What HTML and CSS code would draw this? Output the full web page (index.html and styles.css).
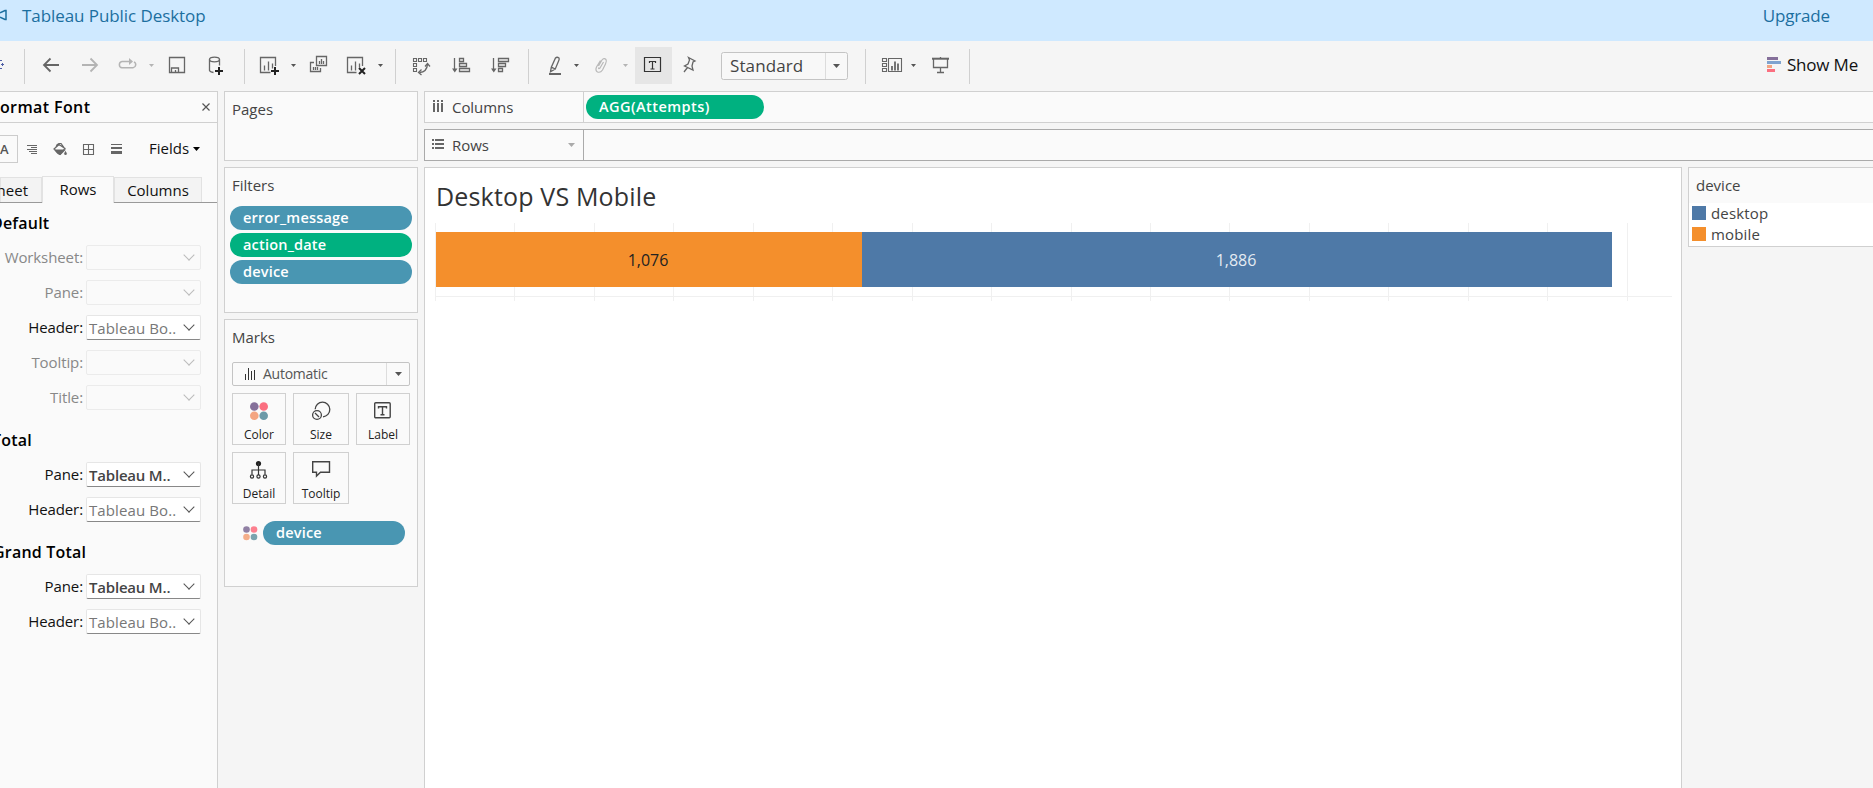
FILE: index.html
```
<!DOCTYPE html>
<html lang="en">
<head>
<meta charset="utf-8">
<title>Tableau Public Desktop</title>
<link rel="stylesheet" href="styles.css">
</head>
<body>
<div class="app">
  <header class="banner">
    <svg class="horn" width="8" height="16" viewBox="0 0 8 16"><path d="M0 5.800L5 3.500h1v9H5L0 10.200" fill="none" stroke="#1c6f9f" stroke-width="1.500"/></svg>
    <span class="brand">Tableau Public Desktop</span>
    <span class="upgrade">Upgrade</span>
  </header>

  <nav class="toolbar">
    <svg class="tools" width="980" height="50" viewBox="0 41 980 50" fill="none" stroke="#666" stroke-width="1.3">
      <path d="M0 60.500h2M0 68.500h2M1 64.500h3M2.500 63v3" stroke="#4e5fa5" stroke-width="1"/>
      <path d="M24.500 49v35M244.500 49v35M395.500 49v35M528.500 49v35M865.500 49v35M969.500 49v35" stroke="#d0d0d0" stroke-width="1"/>
      <path d="M59 65H44.500M50.500 58.500L44 65l6.500 6.500" stroke-width="1.8"/>
      <path d="M82 65h14.500M90.500 58.500L97 65l-6.500 6.500" stroke="#b4b4b4" stroke-width="1.8"/>
      <path d="M129 61.500h-7a3.200 3.200 0 0 0 0 6.300h11a3.200 3.200 0 0 0 1-6" stroke="#b4b4b4" stroke-width="1.500"/>
      <path d="M129 58l4 3.500-4 3.500z" fill="#b4b4b4" stroke="none"/>
      <path d="M149 64h5l-2.500 3z" fill="#b4b4b4" stroke="none"/>
      <path d="M169.500 57.500h15v15h-15zM171.500 72v-4h7v4M175.500 70v2.500"/>
      <ellipse cx="214.500" cy="59.500" rx="5" ry="2.300"/>
      <path d="M209.500 59.500v11q.5 1.500 4 2M219.500 59.500v6"/>
      <path d="M215 71h8M219 67v8" stroke="#222" stroke-width="2"/>
      <path d="M275.500 66v-8.500h-15v15h10M264.500 65.500v5M268.500 61.500v9M272.500 63.500v5"/>
      <path d="M271 71h8M275 67v8" stroke="#222" stroke-width="2"/>
      <path d="M291 64h5l-2.500 3z" fill="#555" stroke="none"/>
      <path d="M316.500 56.500h10v9h-10zM319.500 61v3M321.500 59v5M323.500 61v3M314 62.500h-3.500v9h10V68M313.500 67v3M315.500 67v3M317.500 67v3"/>
      <path d="M362.500 66v-8.500h-15v15h9M351.500 65.500v5M355.500 61.500v9M359.500 63.500v4"/>
      <path d="M359 68l6 6M365 68l-6 6" stroke="#222" stroke-width="2"/>
      <path d="M378 64h5l-2.500 3z" fill="#555" stroke="none"/>
      <path d="M413.500 58.500h3v3h-3zM418.500 58.500h3v3h-3zM423.500 58.500h3v3h-3zM413.500 63.500h3v3h-3zM413.500 68.500h3v3h-3z" stroke-width="1.100"/>
      <path d="M419.500 72.500q7.500-.5 8-8.500" stroke-width="1.400"/>
      <path d="M425 66.500l2.500-3 2.500 3M421.500 69.500l-3 3 3 2.500"/>
      <path d="M454.500 58v13M459.500 58.500h4v3h-4zM459.500 63.500h7v3h-7zM459.500 68.500h10v3h-10z"/>
      <path d="M452 68.500h5.500l-2.700 4z" fill="#666" stroke="none"/>
      <path d="M493.500 58v13M498.500 58.500h10v3h-10zM498.500 63.500h7v3h-7zM498.500 68.500h4v3h-4z"/>
      <path d="M491 68.500h5.500l-2.700 4z" fill="#666" stroke="none"/>
      <path d="M555.500 58q1.500-1.500 3.500 0 .5 1-.2 2.500l-3.500 8.500-4-1.800zM551.300 67.200l-.8 4.500 4.800-2.700"/>
      <path d="M549 74h12" stroke-width="2"/>
      <path d="M574 64h5l-2.500 3zM911 64h5l-2.500 3z" fill="#555" stroke="none"/>
      <path d="M598.500 66l3.500-6q2-2.500 4-.5 1 1.500-.5 4.500l-3 6q-2 3-5 2-2.500-1.500-1-5l4-6.500M603.500 62l-3.500 6q-1.500 1.500-1.500-.5" stroke="#b8b8b8" stroke-width="1.200"/>
      <path d="M623 64h5l-2.500 3z" fill="#b4b4b4" stroke="none"/>
      <path d="M635 47h37v37h-37z" fill="#e6e6e6" stroke="none"/>
      <path d="M644.500 57.500h16v14h-16zM649.500 63v-1.500h6V63M652.500 61.500v7.500M650.500 69h4" stroke="#333" stroke-width="1.200"/>
      <path d="M688.500 57.500l6.500 3.500-2 1-1 4 1 4-8.500-4 3.500-2 1.500-4zM687.500 67.500l-3.500 4.500"/>
      <path d="M721.500 54.500q0-2 2-2h122q2 0 2 2v23q0 2-2 2h-122q-2 0-2-2z" fill="#f8f8f8" stroke="#c4c4c4" stroke-width="1"/>
      <path d="M825.500 53v26" stroke="#dcdcdc" stroke-width="1"/>
      <path d="M833 64h7l-3.500 4z" fill="#555" stroke="none"/>
      <path d="M888.500 58.500h13v13h-13zM882.500 58.500h4v3h-4zM882.500 63.500h4v3h-4zM882.500 68.500h4v3h-4z" stroke-width="1.100"/>
      <path d="M892 66v4.500M895 61.500v9M898 63.500v7" stroke-width="1.800"/>
      <path d="M932 58.700h17" stroke-width="2"/>
      <path d="M933.500 59v8.500h14V59M940.500 57v2M940.500 67.500v5M937 72.500h7"/>
    </svg>
    <span class="fit">Standard</span>
    <div class="showme">
      <svg width="14" height="16" viewBox="0 0 14 16"><path d="M0 0h11v3H0z" fill="#85709a"/><path d="M0 4h14v3H0z" fill="#7fa3cf"/><path d="M0 8h5v3H0z" fill="#f1a582"/><path d="M0 12h8v3H0z" fill="#fb6f80"/></svg>
      <span>Show Me</span>
    </div>
  </nav>

  <main class="work">
    <aside class="format">
      <div class="format-head"><b>Format Font</b>
        <svg width="8" height="8" viewBox="0 0 8 8"><path d="M.5.5l7 7M7.500.5l-7 7" stroke="#555" stroke-width="1.200"/></svg></div>
      <div class="format-tools">
        <span class="abox">A</span>
        <svg width="109" height="14" viewBox="18 0 109 14" fill="none" stroke="#666">
          <path d="M27 2.500h10M31 4.500h6M27 6.500h10M29 8.500h8M31 10.500h6" stroke="#666"/>
          <path d="M54 6l5-4.500 6 4-5 6zM56 4q1-4 5-3.500l3 4" stroke-width="1.200"/><path d="M54 6.500h12l-5.500 5.500q-3 0-6.500-5.500z" fill="#666" stroke="none"/><path d="M65.500 8.500q2 3 0 3.500-2-.5 0-3.500" fill="#666" stroke-width=".8"/>
          <path d="M83.500 1.500h10v10h-10zM88.500 1.500v10M83.500 6.500h10" stroke-width="1.100"/>
          <path d="M111 1h11v1h-11zM111 4h11v2h-11zM111 8h11v3h-11z" fill="#666" stroke="none"/>
        </svg>
        <span class="fields">Fields</span><svg class="ftri" width="7" height="4" viewBox="0 0 7 4"><path d="M0 0h7L3.500 4z"/></svg>
      </div>
      <div class="tabs"><span class="tab t1">Sheet</span><span class="tab on">Rows</span><span class="tab t3">Columns</span></div>
      <h3 class="h-def">Default</h3>
      <div class="row off"><label>Worksheet:</label><span class="sel"></span></div>
      <div class="row off"><label>Pane:</label><span class="sel"></span></div>
      <div class="row"><label>Header:</label><span class="sel">Tableau Bo..</span></div>
      <div class="row off"><label>Tooltip:</label><span class="sel"></span></div>
      <div class="row off"><label>Title:</label><span class="sel"></span></div>
      <h3 class="h-tot">Total</h3>
      <div class="row"><label>Pane:</label><span class="sel strong">Tableau M..</span></div>
      <div class="row"><label>Header:</label><span class="sel">Tableau Bo..</span></div>
      <h3 class="h-grand">Grand Total</h3>
      <div class="row"><label>Pane:</label><span class="sel strong">Tableau M..</span></div>
      <div class="row"><label>Header:</label><span class="sel">Tableau Bo..</span></div>
    </aside>

    <section class="cards">
      <div class="card pages"><h4>Pages</h4></div>
      <div class="card filters"><h4>Filters</h4>
        <div class="pill blue"><span>error_message</span></div>
        <div class="pill green"><span>action_date</span></div>
        <div class="pill blue"><span>device</span></div>
      </div>
      <div class="card marks"><h4>Marks</h4>
        <div class="mtype">
          <svg width="11" height="12" viewBox="0 0 11 12"><path d="M.5 6v6M3.500 0v12M6.500 3v9M9.500 2v10" stroke="#333" stroke-width="1"/></svg>
          <span>Automatic</span><i><svg width="7" height="4" viewBox="0 0 7 4"><path d="M0 0h7L3.500 4z" fill="#555"/></svg></i>
        </div>
        <div class="grid">
          <div class="btn"><svg width="20" height="20" viewBox="0 0 20 20"><circle cx="5.300" cy="5.500" r="4.300" fill="#85709a"/><circle cx="14.700" cy="5.500" r="4.300" fill="#fb6f80"/><circle cx="5.300" cy="14.800" r="4.300" fill="#f4a582"/><circle cx="14.700" cy="14.800" r="4.300" fill="#6d9aa8"/></svg><span>Color</span></div>
          <div class="btn"><svg width="20" height="20" viewBox="0 0 20 20" fill="none" stroke="#444" stroke-width="1.300"><path d="M4.200 8.300A7.300 7.300 0 1 1 12 15.800"/><circle cx="6" cy="14" r="4.400"/><path d="M4 12l4 4"/></svg><span>Size</span></div>
          <div class="btn"><svg width="20" height="20" viewBox="0 0 20 20" fill="none" stroke="#444" stroke-width="1.400"><rect x="1.700" y="1.800" width="15.500" height="15" rx="1"/><path d="M5.500 7.500V5.700h8v1.800M9.500 5.500v8.500M7.500 13.800h4"/></svg><span>Label</span></div>
          <div class="btn"><svg width="20" height="20" viewBox="0 0 20 20" fill="none" stroke="#333" stroke-width="1.200"><circle cx="9.500" cy="3.500" r="2.600" fill="#222" stroke="none"/><path d="M9.500 3v12M3 14.500V10h13v4.500"/><circle cx="3" cy="16.500" r="1.600"/><circle cx="9.500" cy="16.500" r="1.600"/><circle cx="16" cy="16.500" r="1.600"/></svg><span>Detail</span></div>
          <div class="btn"><svg width="20" height="20" viewBox="0 0 20 20" fill="none" stroke="#444" stroke-width="1.400"><path d="M2 1.700h16.500v10.500H9.500L5.500 16v-3.800H1.700V1.700z"/></svg><span>Tooltip</span></div>
        </div>
        <div class="enc"><svg width="15" height="15" viewBox="0 0 15 15"><circle cx="3.500" cy="3.500" r="3.300" fill="#9080a4"/><circle cx="11" cy="3.500" r="3.300" fill="#fc7f8e"/><circle cx="3.500" cy="11" r="3.300" fill="#f4ae8a"/><circle cx="11" cy="11" r="3.300" fill="#7aa3ae"/></svg>
          <div class="pill blue"><span>device</span></div></div>
      </div>
    </section>

    <section class="stage">
      <div class="shelf">
        <div class="slabel"><svg width="12" height="14" viewBox="0 0 12 14"><path d="M1 0h2v2H1zM5 0h2v2H5zM9 0h2v2H9zM1 3h2v9H1zM5 3h2v9H5zM9 3h2v9H9z" fill="#666"/></svg><span>Columns</span></div>
        <div class="pill green agg"><span>AGG(Attempts)</span></div>
      </div>
      <div class="shelf rows">
        <div class="slabel"><svg width="12" height="14" viewBox="0 0 12 14"><path d="M0 1h2v2H0zM0 5h2v2H0zM0 9h2v2H0zM3 1h9v2H3zM3 5h9v2H3zM3 9h9v2H3z" fill="#666"/></svg><span>Rows</span><svg class="stri" width="7" height="4" viewBox="0 0 7 4"><path d="M0 0h7L3.500 4z" fill="#aaa"/></svg></div>
      </div>
      <div class="lower">
        <div class="view">
          <h1>Desktop VS Mobile</h1>
          <div class="plot">
            <div class="bar mobile"><span>1,076</span></div><div class="bar desktop"><span>1,886</span></div>
          </div>
        </div>
        <div class="side">
          <div class="legend"><h4>device</h4>
            <div class="key"><i class="k-desk"></i><span>desktop</span></div>
            <div class="key"><i class="k-mob"></i><span>mobile</span></div>
          </div>
        </div>
      </div>
    </section>
  </main>
</div>
</body>
</html>
```
FILE: styles.css
```
* { box-sizing: border-box; }
body { margin: 0; width: 1873px; height: 788px; overflow: hidden; background: #f5f5f5; color: #444; font: 15px "Open Sans", "Noto Sans", sans-serif; }
h1, h3, h4 { margin: 0; font-weight: 400; }
span, b, label, h3, h4 { white-space: nowrap; }
h4 { font-size: 15px; }
svg { display: block; flex: none; }
.app { display: flex; flex-direction: column; height: 788px; overflow: hidden; }
.banner { height: 41px; flex: none; background: #cfe9ff; color: #1c6f9f; display: flex; padding-right: 43px; line-height: 32px; font-size: 17px; }
.horn { margin-top: 7px; }
.brand { margin-left: 14px; letter-spacing: -.07px; }
.upgrade { margin-left: auto; letter-spacing: -.15px; }
.toolbar { height: 50px; flex: none; display: flex; position: relative; }
.fit { position: absolute; left: 730px; top: 13px; line-height: 24px; font-size: 17px; letter-spacing: .1px; }
.showme { margin-left: auto; display: flex; padding-right: 15px; gap: 6px; color: #111; font-size: 17px; line-height: 48px; letter-spacing: -.2px; }
.showme svg { margin-top: 16px; }
.work { flex: 1; display: flex; gap: 6px; min-height: 0; }

.format { width: 218px; flex: none; border: solid #d0d0d0; border-width: 1px 1px 0 0; background: #fafafa; overflow: hidden; color: #111; }
.format-head { height: 31px; border-bottom: 1px solid #d0d0d0; display: flex; justify-content: space-between; padding-right: 7px; font-size: 16px; line-height: 30px; color: #000; }
.format-head b, .format h3 { font-weight: 600; }
.format-head b { margin-left: -9px; letter-spacing: .4px; }
.format-head svg { margin-top: 11px; }
.format-tools { height: 52px; display: flex; padding-top: 12px; }
.format-tools svg { margin-top: 8px; }
.abox { width: 18px; height: 28px; border: 1px solid #ccc; border-left: 0; font-size: 13px; line-height: 26px; color: #555; flex: none; font-weight: 600; }
.fields { margin-left: 22px; line-height: 27px; width: 44px; }
.format-tools .ftri { margin-top: 12px; }
.tabs { height: 28px; display: flex; align-items: flex-end; border-bottom: 1px solid #999; line-height: 24px; }
.tab { height: 25px; border: 1px solid #e2e2e2; background: #f3f3f3; text-align: center; border-bottom: 0; flex: none; }
.t1 { width: 42px; display: flex; justify-content: flex-end; padding-right: 13px; }
.on { width: 72px; height: 27px; background: #fafafa; margin-bottom: -1px; }
.t3 { width: 88px; }
.format h3 { font-size: 16px; line-height: 22px; color: #000; letter-spacing: .2px; }
.h-def { margin: 9px 0 11px -9px; }
.h-tot { margin: 19px 0 11px -8px; }
.h-grand { margin: 19px 0 11px -7px; }
.row { display: flex; height: 25px; margin-bottom: 10px; line-height: 25px; }
.row label { width: 83px; margin-right: 3px; display: flex; justify-content: flex-end; letter-spacing: -.1px; }
.sel { position: relative; width: 115px; border: 1px solid #e6e6e6; border-bottom-color: #888; border-radius: 2px; background: #fff; padding-left: 2px; color: #777; line-height: 25px; letter-spacing: .1px; }
.sel::after { content: ""; position: absolute; right: 7px; top: 5px; width: 7px; height: 7px; border: solid #555; border-width: 0 1px 1px 0; transform: rotate(45deg); }
.strong { color: #444; font-weight: 600; letter-spacing: -.2px; }
.off { color: #888; }
.off .sel { border-color: #ebebeb; background: #fafafa; }
.off .sel::after { border-color: #bbb; }

.cards { width: 194px; flex: none; display: flex; flex-direction: column; gap: 6px; }
.card { border: 1px solid #d0d0d0; background: #fafafa; }
.card h4 { margin-left: 7px; height: 30px; line-height: 24px; padding-top: 5px; }
.pages { height: 70px; }
.filters { height: 146px; display: flex; flex-direction: column; gap: 3px; }
.card.filters h4 { height: 35px; }
.pill { height: 24px; border-radius: 12px; color: #fff; padding-left: 13px; line-height: 24px; font-size: 14.5px; font-weight: 600; letter-spacing: .2px; }
.filters .pill { width: 182px; margin-left: 5px; flex: none; }
.blue { background: #4996b2; }
.green { background: #00b180; }
.marks { height: 268px; }
.mtype { width: 178px; height: 24px; margin: 12px 0 7px 7px; border: 1px solid #c4c4c4; border-radius: 2px; display: flex; line-height: 22px; font-size: 14px; letter-spacing: -.25px; color: #555; }
.mtype > svg { margin: 5px 7px 0 12px; }
.mtype i { margin-left: auto; width: 23px; border-left: 1px solid #ddd; padding: 9px 0 0 8px; }
.grid { display: grid; grid-template-columns: 54px 56px 54px; grid-auto-rows: 52px; gap: 7px; margin-left: 7px; }
.btn { border: 1px solid #d0d0d0; display: flex; flex-direction: column; align-items: center; padding-top: 7px; font-size: 12px; line-height: 14px; color: #222; }
.btn span { margin-top: 7px; }
.enc { display: flex; gap: 5px; margin: 17px 0 0 18px; align-items: center; }
.enc .pill { width: 142px; }

.stage { flex: 1; min-width: 0; display: flex; flex-direction: column; gap: 6px; }
.shelf { height: 32px; flex: none; display: flex; align-items: center; border: 1px solid #d0d0d0; border-right: 0; background: #fafafa; }
.slabel { width: 159px; height: 30px; display: flex; align-items: center; border-right: 1px solid #d0d0d0; padding-left: 7px; }
.rows, .rows .slabel { border-color: #aaa; }
.slabel span { margin-left: 8px; letter-spacing: -.05px; }
.stri { margin: 0 8px 0 auto; }
.agg { width: 178px; margin-left: 2px; letter-spacing: .45px; }
.lower { flex: 1; display: flex; gap: 6px; min-height: 0; }
.view { width: 1258px; border: 1px solid #d0d0d0; border-bottom: 0; background: #fff; padding: 10px 9px 0 10px; flex: none; }
.view h1 { font-size: 25px; line-height: 37px; margin: 0 0 8px 1px; color: #333; letter-spacing: .17px; }
.plot { height: 78px; width: 1237px; display: flex; padding: 9px 0 0 1px; background: linear-gradient(#f0f0f0, #f0f0f0) 0 73px / 100% 1px no-repeat, repeating-linear-gradient(90deg, #f0f0f0 0 1px, transparent 1px 79.450px) 0 0 / 1193px 100% no-repeat; }
.bar { height: 55px; text-align: center; line-height: 56px; font-size: 16px; }
.bar span { margin-right: 2px; }
.mobile { width: 426px; background: #f48f2c; color: #222; }
.desktop { width: 750px; background: #4e79a7; color: #e4ebf2; }
.legend { width: 185px; height: 80px; border: 1px solid #d0d0d0; border-right: 0; background: #fff; }
.legend h4 { height: 35px; background: #fafafa; line-height: 35px; padding-left: 7px; margin-bottom: 3px; }
.key { height: 21px; display: flex; padding-left: 3px; gap: 5px; line-height: 15px; font-size: 15px; letter-spacing: .15px; }
.key i { width: 14px; height: 14px; }
.k-desk { background: #4e79a7; }
.k-mob { background: #f48f2c; }
```
